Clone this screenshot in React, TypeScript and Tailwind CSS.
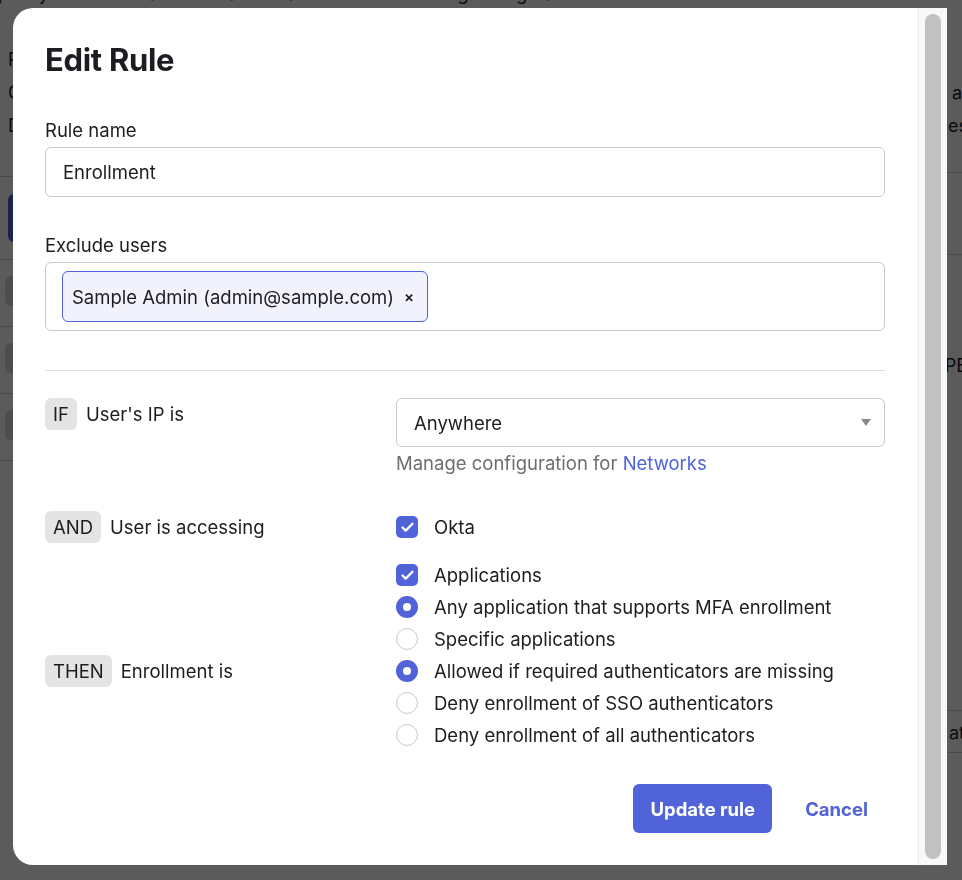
import { Check } from "lucide-react";

const Checkbox = () => (
  <span className="w-[22px] h-[22px] rounded-[5px] bg-[#5063d9] flex items-center justify-center shrink-0">
    <Check className="w-[15px] h-[15px] text-white" strokeWidth={3.75} />
  </span>
);

const Radio = ({ on }: { on?: boolean }) =>
  on ? (
    <span className="w-[22px] h-[22px] rounded-full bg-[#5063d9] flex items-center justify-center shrink-0">
      <span className="w-[8px] h-[8px] rounded-full bg-white" />
    </span>
  ) : (
    <span className="w-[22px] h-[22px] rounded-full border-[1.5px] border-[#c9c9c9] bg-white shrink-0" />
  );

const Option = ({ children, box }: { children: string; box: React.ReactNode }) => (
  <div className="h-[32px] flex items-center gap-4">
    {box}
    <span>{children}</span>
  </div>
);

const Cond = ({ tag, text }: { tag: string; text: string }) => (
  <div className="flex items-center gap-[9px]">
    <span className="h-[32px] px-[8px] rounded-[6px] bg-[#e4e4e4] flex items-center">{tag}</span>
    <span>{text}</span>
  </div>
);

// page that sits behind the dimmed overlay
const BackgroundPage = () => (
  <div className="h-screen overflow-hidden bg-white text-[#1d1d21] text-[18px] leading-[24px]">
    <p className="-mt-[18px] -ml-[2px] whitespace-nowrap">policy enrollment authenticators based on the following configuration</p>
    <div className="grid grid-cols-2">
      <div>
        <div className="pl-2 pt-[42px] pb-[38px] flex flex-col gap-[9px]">
          <span>Rule name</span>
          <span>Created</span>
          <span>Description</span>
        </div>
        <div className="border-t border-[#d0d0d0] h-[83px] pl-2 pt-[17px]">
          <div className="w-[110px] h-[48px] rounded-[6px] bg-[#5063d9]" />
        </div>
        {[0, 1, 2].map((i) => (
          <div key={i} className="border-t border-[#d0d0d0] h-[67px] pl-[5px] pt-[16px]">
            <div className="w-[90px] h-[30px] rounded-[6px] bg-[#d9d9d9]" />
          </div>
        ))}
        <div className="border-t border-[#d0d0d0]" />
      </div>
      <div className="text-right">
        <div className="pt-[75px] pb-[34px] flex flex-col gap-[9px] -mr-[6px]">
          <span>Last updated at</span>
          <span>Priorities</span>
        </div>
        <div className="border-t border-[#d0d0d0] h-[82px]" />
        <div className="border-t border-[#d0d0d0] h-[456px] pt-[99px] -mr-[5px]">TYPE</div>
        <div className="border-t border-[#d0d0d0] h-[42px] pt-[10px] -mr-[3px]">Created at</div>
        <div className="border-t border-[#d0d0d0]" />
      </div>
    </div>
  </div>
);

export default function App() {
  return (
    <div className="relative font-['Inter','Liberation_Sans',sans-serif]">
      <BackgroundPage />
      <div className="fixed inset-0 bg-black/[0.643]">
        <div className="absolute left-[13px] top-[8px] w-[934px] h-[857px] bg-white rounded-l-[20px] flex overflow-hidden text-[18.5px] leading-[24px] text-[#1d1d21]">
          <div className="flex-1 pl-8 pr-[33px] pt-[32px]">
            <h1 className="text-[31px] leading-[40px] font-bold tracking-[-0.01em]">Edit Rule</h1>

            <label className="block mt-[38px]">Rule name</label>
            <div className="mt-[5px] h-[50px] rounded-[6px] border border-[#c9c9c9] flex items-center px-[17px]">Enrollment</div>

            <label className="block mt-[36px]">Exclude users</label>
            <div className="mt-[5px] h-[69px] rounded-[6px] border border-[#c9c9c9] flex items-center px-4">
              <div className="h-[51px] rounded-[6px] border border-[#5063d9] bg-[#f1f2fc] flex items-center pl-[9px] pr-[13px] gap-[10px]">
                <span>Sample Admin (admin@sample.com)</span>
                <span className="text-[15px] font-semibold leading-none">×</span>
              </div>
            </div>

            <div className="mt-[39px] border-t border-[#e0e0e0]" />

            <div className="mt-[27px] grid grid-cols-[351px_1fr] items-start">
              <Cond tag="IF" text="User's IP is" />
              <div>
                <div className="h-[49px] rounded-[6px] border border-[#c9c9c9] flex items-center justify-between pl-[17px] pr-[13px]">
                  <span>Anywhere</span>
                  <svg width="10" height="7" viewBox="0 0 10 7">
                    <path d="M0 0h10L5 7z" fill="#8a8a8a" />
                  </svg>
                </div>
                <p className="mt-[4px] text-[#6e6e6e]">
                  Manage configuration for <span className="text-[#5063d9]">Networks</span>
                </p>
              </div>

              <div className="mt-[36px]">
                <Cond tag="AND" text="User is accessing" />
              </div>
              <div className="mt-[36px]">
                <Option box={<Checkbox />}>Okta</Option>
                <div className="mt-4">
                  <Option box={<Checkbox />}>Applications</Option>
                  <Option box={<Radio on />}>Any application that supports MFA enrollment</Option>
                  <Option box={<Radio />}>Specific applications</Option>
                </div>
              </div>

              <Cond tag="THEN" text="Enrollment is" />
              <div>
                <Option box={<Radio on />}>Allowed if required authenticators are missing</Option>
                <Option box={<Radio />}>Deny enrollment of SSO authenticators</Option>
                <Option box={<Radio />}>Deny enrollment of all authenticators</Option>
              </div>
            </div>

            <div className="mt-[33px] flex justify-end gap-4">
              <button className="h-[49px] px-[17px] rounded-[6px] bg-[#5063d9] text-white font-bold">Update rule</button>
              <button className="h-[49px] px-[17px] text-[#5063d9] font-bold">Cancel</button>
            </div>
          </div>

          <div className="w-[29px] bg-[#f8f8f8] border-l border-[#ebebeb] pt-[6px] pb-[6px] pl-[6px]">
            <div className="w-[16px] h-full rounded-full bg-[#c1c1c1]" />
          </div>
        </div>
      </div>
    </div>
  );
}
